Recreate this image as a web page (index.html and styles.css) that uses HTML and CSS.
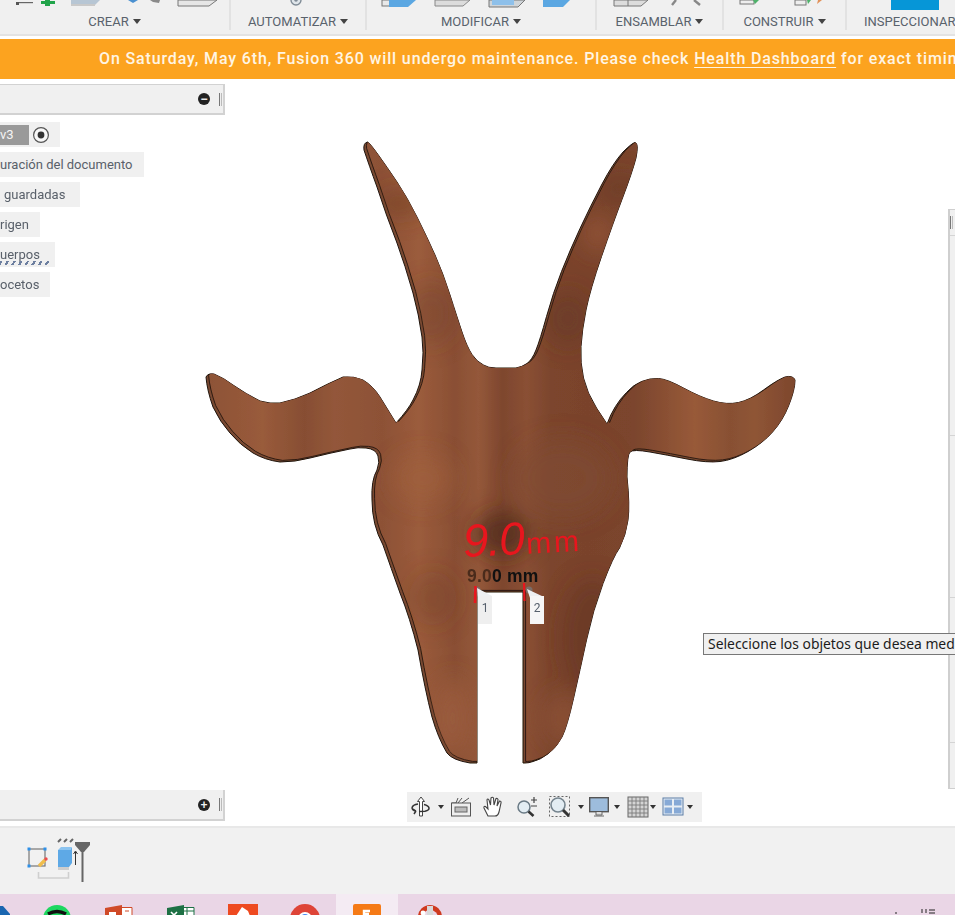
FILE: index.html
```html
<!DOCTYPE html>
<html lang="es">
<head>
<meta charset="utf-8">
<title>Fusion 360</title>
<link rel="stylesheet" href="styles.css">
</head>
<body>
<header class="toolbar">
  <section class="group g-crear">
    <svg class="tool-icons" viewBox="0 0 230 11" width="230" height="11">
      <rect x="16" y="2" width="17" height="1.2" fill="#666"/><rect x="16" y="2" width="3" height="3" fill="#555"/>
      <rect x="45" y="0" width="5" height="6" fill="#21a44a"/><rect x="41" y="1" width="14" height="3" fill="#21a44a"/>
      <polygon points="71,0 100,0 94,6 71,6" fill="#b7c6d4"/><rect x="71" y="4" width="24" height="2" fill="#c9c9c9"/>
      <polygon points="128,0 138,0 133,3" fill="#4a90d0"/><polygon points="150,0 160,0 159,3 153,2" fill="#8a8a8a"/>
      <polygon points="178,0 217,0 209,6 178,6" fill="#e6e6e6" stroke="#777"/>
    </svg>
    <span class="label">CREAR</span>
  </section>
  <section class="group g-auto">
    <svg class="tool-icons" viewBox="0 0 135 11" width="135" height="11">
      <circle cx="65" cy="0" r="5" fill="#dfe5ea" stroke="#7f8b96" stroke-width="1.4"/><circle cx="65" cy="0" r="1.8" fill="#7f8b96"/>
    </svg>
    <span class="label">AUTOMATIZAR</span>
  </section>
  <section class="group g-mod">
    <svg class="tool-icons" viewBox="0 0 229 11" width="229" height="11">
      <rect x="15" y="0" width="8" height="6" fill="#e8e8e8" stroke="#777"/><polygon points="22,0 49,0 41,7 22,7" fill="#5ba7e2"/>
      <polygon points="68,0 103,0 96,6 68,6" fill="#dcdcdc" stroke="#888"/>
      <polygon points="122,0 158,0 151,7 122,7" fill="#cfd4d8" stroke="#777"/><rect x="125" y="0" width="22" height="5" fill="#8ec0ea"/>
      <polygon points="176,0 203,0 196,7 176,7" fill="#5ba7e2"/>
    </svg>
    <span class="label">MODIFICAR</span>
  </section>
  <section class="group g-ens">
    <svg class="tool-icons" viewBox="0 0 127 11" width="127" height="11">
      <polygon points="18,0 52,0 45,6 18,6" fill="#dcdcdc" stroke="#777"/><line x1="32" y1="0" x2="32" y2="6" stroke="#777"/>
      <path d="M76 5 L80 0 M104 5 L98 0" stroke="#888" stroke-width="2.4" fill="none"/>
    </svg>
    <span class="label">ENSAMBLAR</span>
  </section>
  <section class="group g-con">
    <svg class="tool-icons" viewBox="0 0 123 11" width="123" height="11">
      <rect x="17" y="0" width="14" height="4" fill="#eee" stroke="#777"/><polygon points="32,4 36,0 30,0" fill="#4eb16a"/>
      <rect x="72" y="0" width="11" height="5" fill="#eee" stroke="#777"/><polygon points="85,4 88,0 84,0" fill="#4eb16a"/><polygon points="94,4 99,0 95,0" fill="#e2925a"/>
    </svg>
    <span class="label">CONSTRUIR</span>
  </section>
  <section class="group g-ins">
    <svg class="tool-icons" viewBox="0 0 108 11" width="108" height="11">
      <rect x="44" y="0" width="48" height="10" fill="#0696d7"/>
    </svg>
    <span class="label">INSPECCIONAR</span>
  </section>
</header>

<div class="banner">On Saturday, May 6th, Fusion 360 will undergo maintenance. Please check <a class="banner-link">Health Dashboard</a> for exact timin</div>

<main class="canvas">
  <svg class="model" viewBox="0 80 955 746" width="955" height="746">
    <defs>
      <path id="goat" d="M367.5 142 Q369 142 378 154.5 Q387 167 397 182 Q407 197 417 217 Q427 237 435 255 Q443 273 450 295 Q457 317 462 332 Q467 347 472 354.5 Q477 362 483.5 365 Q488 368 496 368 L516 368 Q522 367 527 363.5 Q532 360 536 350 Q540 340 546.5 316.5 Q553 293 561.5 271.5 Q570 250 580 228.5 Q590 207 601.5 185 Q613 163 623 152 Q632 143 635 142.5 Q639 143 636 158 Q632 173 622.5 198 Q613 223 601.5 256.5 Q590 290 586 310 Q582 330 581 346.5 Q580 363 583.5 378 Q587 393 596.5 408 L607 424 Q614 405 626.5 392.5 Q633 385 641.5 381.5 Q650 378 658.5 378.5 Q667 379 683.5 388 Q700 397 713.5 401 Q727 405 738.5 402.5 Q750 400 763.5 390 Q777 380 785 377 Q793 375 795 380 Q795 390 788.5 406 Q783 420 773 431.5 Q763 443 748 451.5 Q733 460 720 461.5 Q707 463 687 459 Q667 455 650 452 Q633 449 630 452 Q627 455 627 477 Q630 505 628 520 Q626 535 619.5 548 Q613 557 603 583.5 Q593 610 586.5 640 Q580 670 573.5 698.5 Q567 727 562 737 Q557 747 548.5 753.5 Q540 760 533 761.5 Q529 763 525 763 L523 763 L523 592 L477 592 L477 763 L470 763 Q452 760 447 753 Q438 738 432 717 Q425 690 418 650 Q410 618 400 593 Q391 568 383 545 Q372 525 372 500 Q371 480 377 470 Q380 462 378 456 Q376 449 366 448 Q358 447 350 449 Q330 453 310 458 Q295 462 280 462 Q265 460 253 453 Q240 445 230 433 Q220 422 213 407 Q207 390 206 377 Q208 373 214 374 Q224 378 233 385 Q246 394 260 401 Q270 404 280 403 Q295 400 310 393 Q327 384 343 377 Q354 376 363 380 Q373 386 380 397 L396 423 Q408 410 413 400 Q421 385 422 370 Q424 352 422 337 Q419 315 413 293 Q405 265 397 243 Q386 215 377 187 Q369 165 364 150 Q363 143 367.5 142 Z"/>
      <clipPath id="goat-clip"><use href="#goat"/></clipPath>
      <linearGradient id="wood" gradientUnits="userSpaceOnUse" x1="200" y1="0" x2="800" y2="0">
        <stop offset="0" stop-color="#8c5236"/>
        <stop offset=".1" stop-color="#995b3b"/>
        <stop offset=".17" stop-color="#874e33"/>
        <stop offset=".22" stop-color="#93573a"/>
        <stop offset=".3" stop-color="#8d5136"/>
        <stop offset=".36" stop-color="#9b5c3c"/>
        <stop offset=".42" stop-color="#8a4f34"/>
        <stop offset=".46" stop-color="#94583a"/>
        <stop offset=".5" stop-color="#7e462e"/>
        <stop offset=".54" stop-color="#8a5034"/>
        <stop offset=".58" stop-color="#7c452d"/>
        <stop offset=".64" stop-color="#7a432c"/>
        <stop offset=".72" stop-color="#7b452d"/>
        <stop offset=".82" stop-color="#985a39"/>
        <stop offset=".88" stop-color="#885033"/>
        <stop offset=".92" stop-color="#8f5536"/>
        <stop offset="1" stop-color="#7a442b"/>
      </linearGradient>
      <filter id="soft" x="-30%" y="-30%" width="160%" height="160%"><feGaussianBlur stdDeviation="11"/></filter>
      <filter id="edge"><feGaussianBlur stdDeviation=".35"/></filter>
    </defs>
    <g filter="url(#edge)">
      <use href="#goat" fill="#7a4a32" stroke="#1e120b" stroke-width="1"/>
      <g clip-path="url(#goat-clip)">
        <g transform="translate(2.6 -1.6)">
          <use href="#goat" fill="url(#wood)" stroke="#24150d" stroke-width=".9"/>
          <g clip-path="url(#goat-clip)">
            <g filter="url(#soft)">
              <ellipse cx="398" cy="205" rx="26" ry="13" fill="#6e3d26" opacity=".5"/>
              <ellipse cx="618" cy="190" rx="24" ry="14" fill="#5e3420" opacity=".4"/>
              <ellipse cx="428" cy="315" rx="26" ry="32" fill="#6b3d26" opacity=".35"/>
              <ellipse cx="565" cy="320" rx="24" ry="28" fill="#5e3420" opacity=".45"/>
              <ellipse cx="595" cy="235" rx="14" ry="18" fill="#a2603d" opacity=".6"/>
              <ellipse cx="500" cy="535" rx="28" ry="22" fill="#4e2a19" opacity=".75"/>
              <ellipse cx="420" cy="480" rx="30" ry="24" fill="#a0603e" opacity=".6"/>
              <ellipse cx="590" cy="640" rx="32" ry="60" fill="#5f3320" opacity=".5"/>
              <ellipse cx="560" cy="720" rx="20" ry="26" fill="#8e5536" opacity=".7"/>
              <ellipse cx="450" cy="720" rx="18" ry="40" fill="#9d5f3d" opacity=".8"/>
              <ellipse cx="430" cy="600" rx="24" ry="28" fill="#6a3b25" opacity=".3"/>
              <ellipse cx="560" cy="480" rx="50" ry="40" fill="#814b30" opacity=".6"/>
            </g>
          </g>
        </g>
      </g>
    </g>
    <circle cx="477" cy="590" r="3.5" fill="#7b6d68"/>
    <circle cx="529" cy="590" r="3.5" fill="#7b6d68"/>
    <polygon points="477,588 492,596 478,597" fill="#eef0f2"/>
    <polygon points="527,589 544,597 530,598" fill="#eef0f2"/>
    <path d="M475.5 586 L475 603" stroke="#e8161e" stroke-width="2.6" fill="none"/>
    <path d="M524 583 L524.5 601" stroke="#e8161e" stroke-width="2.2" fill="none"/>
  </svg>

  <span class="dimension"><span class="dimension-dim">9.0</span>0 mm</span>
  <span class="pick pick-one">1</span>
  <span class="pick pick-two">2</span>
  <span class="ink"><span class="ink-big">9.0</span><span class="ink-unit">mm</span></span>

  <aside class="browser">
    <div class="panel-head"><span class="round-btn">&#8722;</span><span class="grip"></span></div>
    <ul class="tree">
      <li class="tree-row tree-first"><span class="version">v3</span>
        <svg class="radio" viewBox="0 0 18 18" width="18" height="18"><circle cx="9" cy="9" r="7.4" fill="#f8f8f8" stroke="#555" stroke-width="1.2"/><circle cx="9" cy="9" r="3.4" fill="#333"/></svg>
      </li>
      <li class="tree-row">uración del documento</li>
      <li class="tree-row tree-inset">guardadas</li>
      <li class="tree-row">rigen</li>
      <li class="tree-row tree-hatch">uerpos</li>
      <li class="tree-row">ocetos</li>
    </ul>
  </aside>

  <aside class="comments">
    <div class="panel-head"><span class="round-btn">+</span><span class="grip"></span></div>
  </aside>

  <aside class="side-panel">
    <div class="side-cell side-a"><span class="grip"></span></div>
    <div class="side-cell side-b"></div>
    <div class="side-cell side-c"></div>
    <div class="side-cell side-d"></div>
    <div class="side-cell side-e"></div>
  </aside>

  <div class="tooltip">Seleccione los objetos que desea med</div>

  <nav class="navbar">
    <svg class="nav-icon nav-orbit" viewBox="0 0 24 24" width="24" height="24"><path d="M12 2 L8.5 6.5 H10.5 V21 H13.5 V6.5 H15.5 Z" fill="#fff" stroke="#444"/><path d="M9 9 C2 10 1 15 7 16 M15 9.5 C21 11 22 15 16 16.2 L10 16.4 M7 16 L4 14 M7 16 L5 19" fill="none" stroke="#333" stroke-width="1.5"/></svg>
    <i class="caret"></i>
    <svg class="nav-icon nav-capture" viewBox="0 0 24 24" width="24" height="24"><path d="M3 8 L7 8 L9 3 M9 8 L13 3 M13 8 L20 3" fill="none" stroke="#555"/><rect x="2.5" y="8" width="19" height="13" fill="#eee" stroke="#555"/><rect x="6" y="12" width="12" height="5" fill="#bbb" stroke="#666"/></svg>
    <svg class="nav-icon nav-hand" viewBox="0 0 24 24" width="24" height="24"><path d="M7 21 L3 13 Q2.5 11 4.5 11.5 L7 14 L6 5 Q6.5 3 8 5 L9.5 10 L10 3 Q11.5 1.5 12.5 3 L13 10 L15 3.5 Q16.5 3 17 4.5 L16 11 L18.5 6 Q20.5 6 20 8 L18 17 Q17 21 14 21 Z" fill="#fff" stroke="#444" stroke-width="1.1"/></svg>
    <svg class="nav-icon nav-zoom" viewBox="0 0 24 24" width="24" height="24"><circle cx="9" cy="12" r="6" fill="#e3edf3" stroke="#6a7a85" stroke-width="1.5"/><path d="M13.5 16.5 L18.5 21" stroke="#333" stroke-width="2.6"/><path d="M16 5 H22 M19 2 V8 M16 11 H22" stroke="#444" stroke-width="1.2"/></svg>
    <svg class="nav-icon nav-window" viewBox="0 0 24 24" width="24" height="24"><rect x="1.5" y="1.5" width="20" height="20" fill="none" stroke="#666" stroke-dasharray="2 2"/><circle cx="10" cy="10" r="7" fill="#e3edf3" stroke="#75848e" stroke-width="1.6"/><path d="M15 15 L21 21" stroke="#333" stroke-width="3"/></svg>
    <i class="caret"></i>
    <svg class="nav-icon nav-display" viewBox="0 0 24 24" width="24" height="24"><rect x="2.7" y="2.7" width="18.6" height="14" fill="#9dbcdc" stroke="#555" stroke-width="1.4"/><path d="M9 17 V20 H15 V17 M7 21 H17" stroke="#666" fill="#ddd"/></svg>
    <i class="caret"></i>
    <svg class="nav-icon nav-grid" viewBox="0 0 24 24" width="24" height="24"><rect x="2" y="2" width="20" height="20" fill="#d4d4d4" stroke="#666"/><path d="M6 2 V22 M10 2 V22 M14 2 V22 M18 2 V22 M2 6 H22 M2 10 H22 M2 14 H22 M2 18 H22" stroke="#7b7b7b" stroke-width=".9"/></svg>
    <i class="caret"></i>
    <svg class="nav-icon nav-views" viewBox="0 0 24 24" width="24" height="24"><rect x="2" y="3" width="20" height="17" fill="#e8eef4" stroke="#5a7da6"/><rect x="3.5" y="4.5" width="7.5" height="6" fill="#86a9d6"/><rect x="13" y="4.5" width="7.5" height="6" fill="#86a9d6"/><rect x="3.5" y="12.5" width="7.5" height="6" fill="#86a9d6"/><rect x="13" y="12.5" width="7.5" height="6" fill="#86a9d6"/></svg>
    <i class="caret"></i>
  </nav>
</main>

<section class="status">
  <svg class="status-icons" viewBox="0 0 100 60" width="100" height="60">
    <rect x="29" y="21" width="16" height="17" fill="none" stroke="#777" stroke-width="1.2"/>
    <rect x="27.5" y="19.5" width="3" height="3" fill="#2e90e8"/><rect x="43.5" y="19.5" width="3" height="3" fill="#2e90e8"/><rect x="27.5" y="36.5" width="3" height="3" fill="#2e90e8"/>
    <path d="M39 38 L45 32" stroke="#f0bd4c" stroke-width="3.4"/><circle cx="46" cy="31" r="1.7" fill="#ee4c4c"/>
    <path d="M38.5 44 V50 H68.5 V44" fill="none" stroke="#cfcfcf" stroke-width="1.6"/>
    <polygon points="58,22 70,22 72,19 72,35 69,39 58,39" fill="#5ea9e6"/><polygon points="58,22 61,19 72,19 70,22" fill="#8cc4f0"/><rect x="58" y="39" width="11" height="3" fill="#cdcdcd"/>
    <path d="M58 14 L61 11 M64 14 L67 11 M70 14 L73 11" stroke="#666" stroke-width="2"/>
    <path d="M75.5 37 V24 M73.5 26 L75.5 23 L77.5 26" stroke="#333" fill="none"/>
    <polygon points="75,14 90,14 90,17 84,24 81,24 75,17" fill="#666"/><rect x="81.5" y="22" width="2" height="32" fill="#666"/>
  </svg>
</section>

<footer class="taskbar">
  <div class="task task-edge"><svg viewBox="0 0 26 22" width="26" height="22"><path d="M-4 12 L3 12 L10 20 V22 H-4 Z" fill="#1a66b0"/></svg></div>
  <div class="task"><svg viewBox="0 0 62 22" width="62" height="22"><circle cx="31" cy="25" r="14" fill="#1ed760"/><path d="M22 20 Q31 15 40 20" stroke="#111" stroke-width="3.4" fill="none"/></svg></div>
  <div class="task"><svg viewBox="0 0 62 22" width="62" height="22"><polygon points="17,14 34,11 34,22 17,22" fill="#d04a28"/><polygon points="34,13 44,13 44,22 34,22" fill="#fff"/><path d="M34 13.5 H44 V22 M37 17 H41" stroke="#d04a28" fill="none"/><rect x="21" y="18" width="7" height="4" fill="#fff"/></svg></div>
  <div class="task"><svg viewBox="0 0 62 22" width="62" height="22"><polygon points="17,14 34,11 34,22 17,22" fill="#1d7044"/><polygon points="34,13 44,13 44,22 34,22" fill="#fff"/><path d="M34 13.5 H44 V22 M37 13.5 V22 M34 17 H44" stroke="#1d7044" fill="none"/><path d="M21 18 L24 21 M27 18 L24 21" stroke="#fff" stroke-width="1.6"/></svg></div>
  <div class="task"><svg viewBox="0 0 62 22" width="62" height="22"><rect x="16" y="10" width="30" height="12" fill="#ee4a20"/><polygon points="24,22 30,13 36,17 38,22" fill="#fff"/></svg></div>
  <div class="task"><svg viewBox="0 0 62 22" width="62" height="22"><circle cx="31" cy="25" r="15" fill="#de4437"/><path d="M16 24 Q16 32 22 38 L31 25 Z" fill="#32a853"/><path d="M31 25 L46 22 Q47 30 40 38 Z" fill="#f6c243"/><circle cx="31" cy="25" r="7" fill="#fff"/><circle cx="31" cy="25" r="5" fill="#4285f4"/></svg></div>
  <div class="task task-active"><svg viewBox="0 0 62 22" width="62" height="22"><rect x="17" y="10" width="28" height="14" rx="2" fill="#f57a16"/><path d="M28 22 V17 H34 M28 20 H33" stroke="#fff" stroke-width="2.4" fill="none"/></svg></div>
  <div class="task"><svg viewBox="0 0 62 22" width="62" height="22"><circle cx="32" cy="23" r="12" fill="#cf3a1f"/><circle cx="32" cy="24" r="8" fill="#ead6e6"/><rect x="29" y="12" width="6" height="12" fill="#d8d8d8"/><circle cx="25" cy="19" r="2.4" fill="#fff"/></svg></div>
  <svg class="tray" viewBox="0 0 40 6" width="40" height="6"><path d="M1 5 V3 M27 4 V0 M31 4 V0 M34 1 H40 M34 4 H40" stroke="#222"/></svg>
</footer>
</body>
</html>
```

FILE: styles.css
```css
* { box-sizing: border-box; }
html, body { margin: 0; padding: 0; }
body {
  width: 955px;
  height: 915px;
  overflow: hidden;
  display: flex;
  flex-direction: column;
  background: #fff;
  font-family: Roboto, "Liberation Sans", sans-serif;
}

/* top ribbon */
.toolbar {
  height: 36px;
  flex: none;
  display: flex;
  background: #f0f0f0;
  border-bottom: 2px solid #e3e3e3;
  overflow: hidden;
}
.group {
  flex: none;
  height: 30px;
  display: flex;
  flex-direction: column;
  align-items: center;
  border-right: 2px solid #e2e2e2;
}
.tool-icons { display: block; flex: none; height: 11px; margin-bottom: 4px; }
.g-crear { width: 231px; }
.g-auto { width: 136px; }
.g-mod { width: 230px; }
.g-ens { width: 127px; }
.g-con { width: 123px; }
.g-ins { width: 136px; border-right: 0; align-items: flex-start; }
.g-ins .label { margin-left: 17px; }
.g-ins .label::after { display: none; }
.label {
  font-size: 13px;
  line-height: 14px;
  color: #59626c;
  white-space: nowrap;
}
.label::after {
  content: "";
  display: inline-block;
  margin-left: 4px;
  vertical-align: 2px;
  border: 4px solid transparent;
  border-top: 5px solid #444;
  border-bottom: 0;
}

/* maintenance banner */
.banner {
  margin-top: 3px;
  height: 40px;
  flex: none;
  padding-left: 99px;
  background: #fca31f;
  color: #fff5e4;
  font-size: 16px;
  font-weight: 500;
  letter-spacing: .86px;
  line-height: 40px;
  white-space: nowrap;
  overflow: hidden;
}
.banner-link { text-decoration: underline; text-underline-offset: 3px; }

/* 3D canvas */
.canvas {
  position: relative;
  height: 746px;
  flex: none;
  background: #fff;
  overflow: hidden;
  margin-top: 1px;
}
.model { position: absolute; left: 0; top: 0; display: block; }

.dimension {
  position: absolute;
  left: 467px;
  top: 487px;
  font: 700 17.5px/19px "Liberation Sans", sans-serif;
  letter-spacing: .2px;
  color: #111;
  white-space: nowrap;
}
.dimension-dim { color: #4a2b1b; }
.pick {
  position: absolute;
  top: 516px;
  width: 14px;
  height: 28px;
  background: #efefef;
  color: #56606c;
  font-size: 12px;
  line-height: 25px;
  text-align: center;
}
.pick-one { left: 478px; }
.pick-two { left: 530px; background: #f6f6f6; }
.ink {
  position: absolute;
  left: 463px;
  top: 435px;
  color: #e8161e;
  font: 400 30px/46px "Liberation Sans", sans-serif;
  white-space: nowrap;
  transform: rotate(-3deg);
}
.ink-big { font-size: 46px; font-style: italic; letter-spacing: -1px; }
.ink-unit { letter-spacing: 3px; margin-left: 2px; }

/* browser panel */
.browser { position: absolute; left: 0; top: 4px; width: 225px; }
.panel-head {
  height: 31px;
  display: flex;
  align-items: center;
  justify-content: flex-end;
  gap: 9px;
  padding-right: 1px;
  background: #f0f0f0;
  border: 2px solid #d2d2d2;
  border-left: 0;
  border-top-width: 1px;
}
.round-btn {
  width: 12px;
  height: 12px;
  border-radius: 50%;
  background: #222;
  color: #f0f0f0;
  font: 700 12px/12px "Liberation Sans", sans-serif;
  text-align: center;
}
.grip {
  display: block;
  flex: none;
  width: 3px;
  height: 13px;
  border-left: 1px solid #777;
  border-right: 1px solid #bbb;
  background: #eee;
}
.tree {
  list-style: none;
  margin: 7px 0 0;
  padding: 0;
  display: flex;
  flex-direction: column;
  align-items: flex-start;
  gap: 5px;
}
.tree-row {
  position: relative;
  height: 25px;
  padding-right: 11px;
  background: #f0f0f0;
  color: #59606a;
  font-size: 13px;
  line-height: 25px;
  white-space: nowrap;
}
.tree-first {
  display: flex;
  align-items: center;
  gap: 3px;
  padding-right: 10px;
}
.tree-inset { padding-left: 4px; padding-right: 15px; }
.tree-hatch { padding-right: 15px; }
.tree-hatch::after {
  content: "";
  position: absolute;
  left: 0;
  right: 4px;
  bottom: 2px;
  height: 4px;
  background: repeating-linear-gradient(120deg, #6d7fa0 0 2.2px, transparent 2.2px 5.8px);
}
.version {
  width: 29px;
  height: 20px;
  background: #9a9a9a;
  color: #f5f5f5;
  font-size: 13px;
  line-height: 20px;
}
.radio { display: block; }

.comments { position: absolute; left: 0; top: 710px; width: 225px; }
.comments .panel-head { border-top: 0; }

/* right side panel */
.side-panel {
  position: absolute;
  left: 948px;
  top: 129px;
  width: 7px;
  height: 580px;
  display: flex;
  flex-direction: column;
  background: #f0f0f0;
  border-left: 2px solid #cfcfcf;
  border-bottom: 1px solid #cfcfcf;
  border-top: 1px solid #cfcfcf;
}
.side-cell { border-bottom: 1px solid #d4d4d4; flex: none; }
.side-a { height: 26px; display: flex; align-items: center; }
.side-b { height: 200px; }
.side-c { height: 162px; }
.side-d { height: 145px; }
.side-e { height: 45px; border-bottom: 0; }

.tooltip {
  position: absolute;
  left: 703px;
  top: 553px;
  width: 300px;
  height: 22px;
  padding-left: 4px;
  background: #f0f0f0;
  border: 1px solid #777;
  color: #1c1c1c;
  font: 400 13.9px/20px "Noto Sans", sans-serif;
  white-space: nowrap;
}

/* navigation bar */
.navbar {
  position: absolute;
  left: 407px;
  top: 712px;
  width: 295px;
  height: 30px;
  display: flex;
  align-items: center;
  padding-left: 2px;
  background: #f0f0f0;
}
.nav-icon { display: block; flex: none; }
.caret {
  display: block;
  flex: none;
  width: 0;
  height: 0;
  border: 3.5px solid transparent;
  border-top: 4px solid #333;
  border-bottom: 0;
}
.nav-orbit + .caret { margin-left: 5px; }
.nav-capture { margin-left: 5px; }
.nav-hand { margin-left: 8px; }
.nav-zoom { margin-left: 10px; }
.nav-window { margin-left: 9px; }
.nav-window + .caret { margin-left: 6px; }
.nav-display { margin-left: 3px; }
.nav-display + .caret { margin-left: 3px; }
.nav-grid { margin-left: 6px; }
.nav-views { margin-left: 5px; }
.nav-views + .caret { margin-left: 2px; }

/* status strip */
.status {
  height: 68px;
  flex: none;
  background: #f1f1f1;
  border-top: 2px solid #e8e8e8;
}
.status-icons { display: block; }

/* windows taskbar */
.taskbar {
  position: relative;
  flex: 1;
  min-height: 0;
  display: flex;
  background: #ead6e6;
  overflow: hidden;
}
.task { flex: none; width: 62px; height: 22px; }
.task svg { display: block; }
.task-edge { width: 26px; }
.task-active { background: #f4ebf3; }
.tray { position: absolute; left: 895px; top: 15px; }
```
